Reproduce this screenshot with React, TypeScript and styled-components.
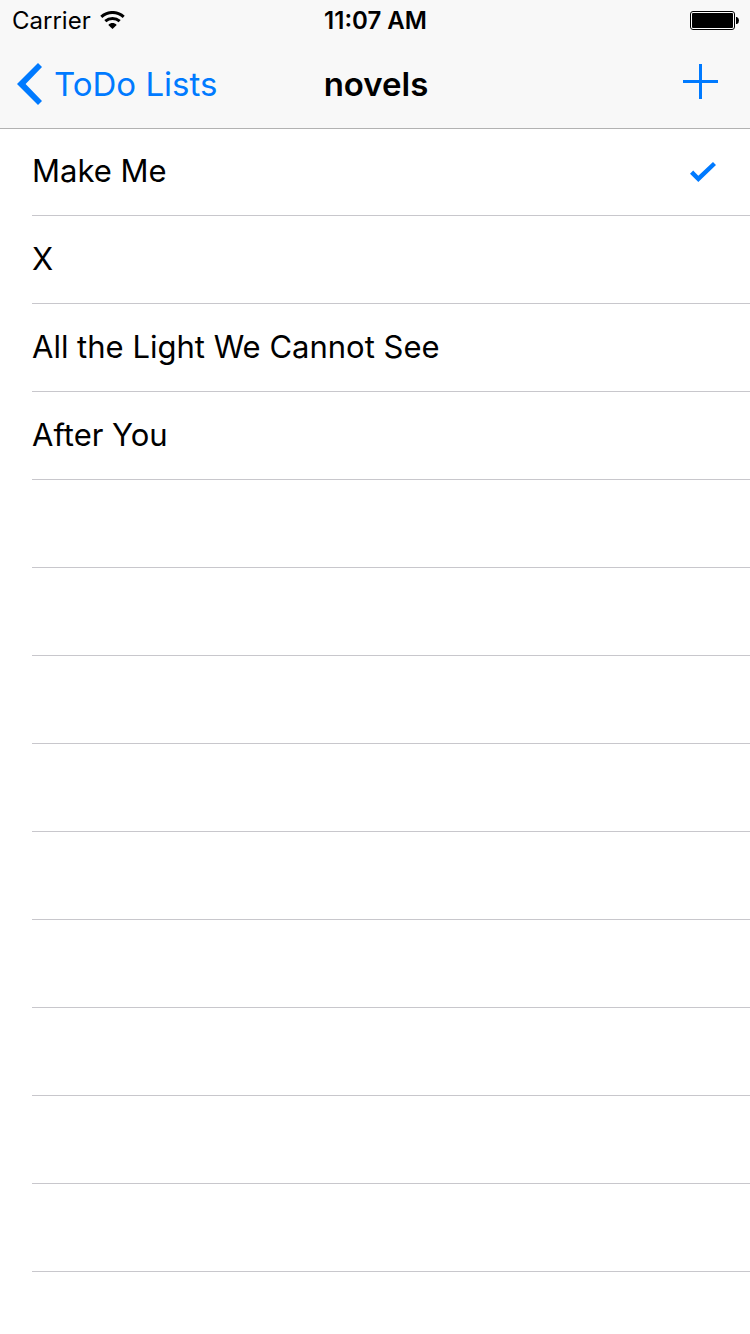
import React, { useState } from 'react';
import styled, { createGlobalStyle } from 'styled-components';

const GlobalStyle = createGlobalStyle`
  *, *::before, *::after { box-sizing: border-box; }
  body {
    margin: 0;
    background: #fff;
    color: #000;
    font-family: Inter, "Liberation Sans", sans-serif;
  }
`;

const Screen = styled.div`
  min-height: 100vh;
  overflow: hidden;
`;

const Header = styled.header`
  background: #f8f8f8;
  box-shadow: 0 1px 0 #b2b2b2;
  position: relative;
`;

const ThreeColumns = styled.div`
  display: grid;
  grid-template-columns: 1fr auto 1fr;
  align-items: center;
`;

const StatusBar = styled(ThreeColumns)`
  height: 40px;
  padding: 1px 11px 0 12px;
  font-size: 24px;
  line-height: 39px;
`;

const NavBar = styled(ThreeColumns)`
  height: 88px;
  padding: 0 14px 0 16px;
`;

const Carrier = styled.div`
  display: flex;
  align-items: center;
  gap: 9px;
`;

const Clock = styled.time`
  font-weight: 600;
`;

const Trailing = styled.div`
  display: flex;
  justify-content: flex-end;
`;

const Icon = styled.svg`
  display: block;
  flex: none;
`;

const BackLink = styled.a`
  display: flex;
  align-items: center;
  gap: 12px;
  color: #007aff;
  font-size: 33px;
  line-height: 40px;
  text-decoration: none;
  white-space: nowrap;
`;

const Title = styled.h1`
  margin: 0;
  font-size: 33px;
  font-weight: 600;
  line-height: 40px;
`;

const AddButton = styled.button`
  padding: 0 18px 5px;
  border: 0;
  background: none;
  color: #007aff;
  cursor: pointer;
`;

const List = styled.ul`
  margin: 0;
  padding: 0 0 0 32px;
  list-style: none;
`;

const Row = styled.li`
  height: 88px;
  border-bottom: 1px solid #c8c7cc;
`;

const Item = styled.label`
  display: flex;
  align-items: center;
  justify-content: space-between;
  height: 100%;
  padding-right: 34px;
  font-size: 31px;
  line-height: 40px;
  cursor: pointer;
`;

const ItemName = styled.span`
  padding-bottom: 2px;
`;

const Toggle = styled.input`
  appearance: none;
  margin: 0;
  width: 0;
  height: 0;

  &:not(:checked) ~ svg { visibility: hidden; }
`;

const CheckMark = styled(Icon)`
  margin-left: auto;
`;

const novels = [
  { name: 'Make Me', done: true },
  { name: 'X', done: false },
  { name: 'All the Light We Cannot See', done: false },
  { name: 'After You', done: false },
];

const EMPTY_ROWS = 9;

const WifiIcon = () => (
  <Icon width="25" height="19" viewBox="0 1 25 19" aria-label="Wi-Fi">
    <g fill="none" stroke="#000" strokeWidth="3">
      <path d="M1.3 6.8C7.7 1 17.3 1 23.7 6.8" />
      <path d="M5.3 11.2C9.5 7.5 15.5 7.5 19.7 11.2" />
    </g>
    <path d="M8.3 15C10.7 12.4 14.3 12.4 16.7 15L12.5 19Z" />
  </Icon>
);

const BatteryIcon = () => (
  <Icon width="49" height="19" viewBox="0 0 49 19" aria-label="Battery full">
    <rect x="0.5" y="0.5" width="44" height="18" rx="2.5" fill="#fff" stroke="#000" />
    <rect x="2" y="2" width="41" height="15" rx="1" />
    <path d="M46 6H47Q49 7 49 9.5T47 13H46Z" />
  </Icon>
);

const BackIcon = () => (
  <Icon width="26" height="42" viewBox="0 0 26 42" aria-hidden="true">
    <path fill="#007aff" d="M22 0L26 4L9.6 21L26 38L22 42L1 21Z" />
  </Icon>
);

const PlusIcon = () => (
  <Icon width="35" height="35" viewBox="0 0 35 35" aria-hidden="true">
    <path fill="currentColor" d="M16 0H19V16H35V19H19V35H16V19H0V16H16Z" />
  </Icon>
);

export default function App() {
  const [items, setItems] = useState(novels);
  const toggle = (index: number) =>
    setItems(items.map((item, i) => (i === index ? { ...item, done: !item.done } : item)));

  return (
    <Screen>
      <GlobalStyle />
      <Header>
        <StatusBar>
          <Carrier>
            Carrier
            <WifiIcon />
          </Carrier>
          <Clock>11:07 AM</Clock>
          <Trailing>
            <BatteryIcon />
          </Trailing>
        </StatusBar>
        <NavBar as="nav">
          <BackLink href="#lists">
            <BackIcon />
            ToDo Lists
          </BackLink>
          <Title>novels</Title>
          <Trailing>
            <AddButton type="button" aria-label="Add item">
              <PlusIcon />
            </AddButton>
          </Trailing>
        </NavBar>
      </Header>
      <List>
        {items.map((item, index) => (
          <Row key={item.name}>
            <Item>
              <ItemName>{item.name}</ItemName>
              <Toggle type="checkbox" checked={item.done} onChange={() => toggle(index)} />
              <CheckMark width="26" height="20" viewBox="0 0 26 20" aria-hidden="true">
                <path fill="#007aff" d="M0 11.8L3.2 8.6L8.3 13.8L23 0L26 3L8.3 20Z" />
              </CheckMark>
            </Item>
          </Row>
        ))}
        {Array.from({ length: EMPTY_ROWS }, (_, i) => (
          <Row key={i} aria-hidden="true" />
        ))}
      </List>
    </Screen>
  );
}
